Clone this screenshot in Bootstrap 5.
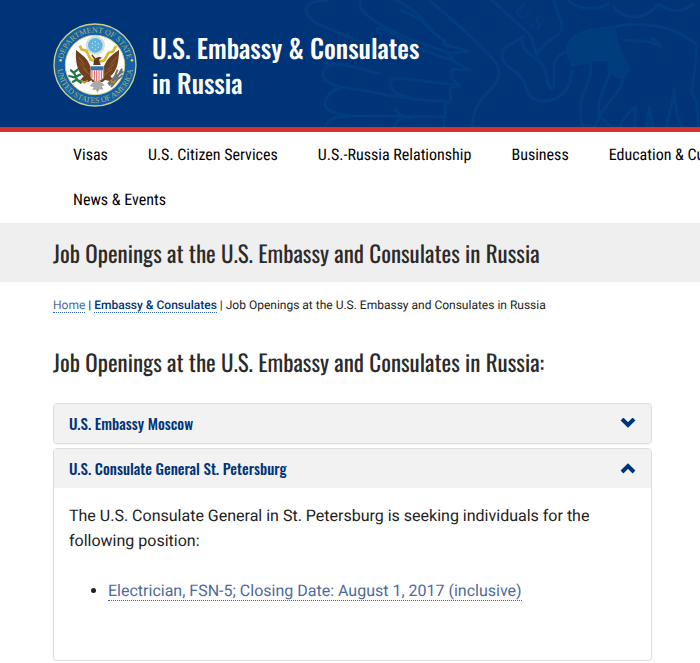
<!DOCTYPE html>
<html lang="en">
<head>
<meta charset="utf-8">
<meta name="viewport" content="width=device-width, initial-scale=1">
<title>Job Openings at the U.S. Embassy and Consulates in Russia</title>
<link href="https://cdn.jsdelivr.net/npm/bootstrap@5.3.0/dist/css/bootstrap.min.css" rel="stylesheet">
<style>
  :root { --navy: #003478; --display: Oswald, "Roboto Condensed", "Liberation Sans Narrow", "Liberation Sans", sans-serif; }
  body { font-family: Roboto, sans-serif; color: #222; text-rendering: geometricPrecision; }
  .gutter { padding-left: 53px; padding-right: 48px; }
  .site-header { background: var(--navy); border-bottom: 5px solid #d9302c; min-height: 132px; padding-top: 23px; }
  .watermark { pointer-events: none; }
  .site-name { font: 500 26px/35px var(--display); max-width: 300px; margin-top: 7px; margin-left: 15px; }
  .display-title { font-family: var(--display); font-weight: 400; font-size: 23px; line-height: 35px; color: #2b2b2b; }
  .site-menu { min-width: 860px; padding: 0 53px 1px; }
  .site-menu a { display: block; padding: 0 20px; font: 400 16px/45px "Roboto Condensed", "Liberation Sans Narrow", sans-serif; color: #000; text-decoration: none; }
  .title-band { background: #efefef; padding-top: 13px; padding-bottom: 11px; }
  .crumbs { font-size: 12px; line-height: 16px; padding-top: 15px; }
  .dotted { text-decoration: none; border-bottom: 1px dotted #2b66ad; color: var(--navy); }
  .dotted.soft { color: #4e6a9c; }
  .crumbs .dotted { font-weight: 500; }
  .crumbs .dotted.soft { font-weight: 400; }
  .section-title { margin: 32px 0 23px; }
  .panel { border: 1px solid #ddd; border-radius: 4px; box-shadow: 0 1px 1px rgba(0,0,0,.05); overflow: hidden; }
  .panel-toggle { background: #f2f2f2; color: var(--navy); font: 500 15px/39px var(--display); padding: 0 15px; }
  .panel-text { padding: 15px 15px 57px; font-size: 16px; line-height: 25px; }
  .panel-text p { margin-bottom: 25px; }
  .panel-text ul { padding-left: 39px; }
</style>
<script src="https://cdn.jsdelivr.net/npm/bootstrap@5.3.0/dist/js/bootstrap.bundle.min.js"></script>
</head>
<body>
<header class="site-header gutter position-relative overflow-hidden">
  <svg class="watermark position-absolute top-0 end-0" width="400" height="127" viewBox="0 0 1200 381" fill="none" stroke="#003d7d" stroke-width="9" stroke-linejoin="round" aria-hidden="true">
    <path d="M85 2C45 0 12 10 20 38C28 65 70 80 125 102L230 145M185 0C165 25 205 52 250 78L335 120L450 160M278 -8C330 25 372 50 392 92L430 120L445 145"/>
    <path d="M70 190C90 190 160 195 240 222M120 195C75 185 60 220 75 240C110 268 175 265 245 282C290 290 360 304 440 304M270 240C270 280 300 290 350 296M245 105C210 80 245 78 290 108C340 138 385 160 455 180M120 265C90 270 65 300 80 325C100 345 150 350 230 348L440 350M75 385C80 355 110 348 150 350M285 325C300 350 315 360 350 350M280 385C290 355 315 350 350 350M270 240C290 228 370 245 480 256"/>
    <path d="M300 30C350 50 375 65 400 98L435 122L430 132L505 154L445 160L462 185L512 211L458 207L455 235L480 257L450 264L452 304L435 310L437 340L430 350L432 381"/>
    <path d="M386 0C455 55 530 125 580 178C607 210 600 240 570 270C535 304 515 335 519 385"/>
    <path d="M570 -5L675 90C705 117 700 145 710 165C718 145 735 130 762 112C786 102 791 80 780 53L760 0M675 107L615 143C600 155 605 185 625 200C650 218 674 235 680 268C687 295 710 305 735 303C785 300 812 265 817 210M665 120C670 150 690 165 715 182C750 208 730 255 757 268C768 250 757 220 764 188C770 165 788 158 803 154"/>
    <path d="M803 0C835 28 890 35 928 10M938 15C965 60 1035 65 1075 12C1110 38 1155 38 1182 10"/>
    <path d="M805 155C800 110 855 82 925 87C965 68 1060 70 1115 90C1155 105 1170 120 1192 132L1180 240L1175 275L1190 310L1195 381M870 180C878 220 865 250 848 285C835 325 842 360 850 385M935 185C934 235 900 270 895 325L900 350M970 220C974 270 925 295 900 350L880 385M900 350L940 385"/>
    <path fill="#003d7d" d="M803 154C800 110 850 85 943 83C945 133 967 170 988 210C979 210 973 220 967 234C955 233 938 220 925 207L930 182C900 172 880 180 850 189L815 195Z"/>
    <path d="M970 119C1010 128 1060 115 1084 146M1050 116C1072 116 1080 128 1084 146M958 385C975 345 992 330 1008 322L1003 385M1038 385L1048 322L1060 385M1100 385C1105 335 1120 310 1122 265C1127 320 1130 360 1150 385"/>
    <g fill="#003d7d" stroke="none" font-family="Liberation Serif, serif" font-size="60"><text transform="translate(640 34) rotate(42)">U</text><text transform="translate(688 74) rotate(36)">S</text></g>
  </svg>
  <div class="d-flex position-relative">
    <svg class="flex-shrink-0" width="84" height="84" viewBox="36 39 252 252" role="img" aria-label="Department of State seal">
      <circle cx="162" cy="165" r="123" fill="#1460a6" stroke="#cbcf86" stroke-width="4"/>
      <circle cx="162" cy="165" r="89" fill="#fff" stroke="#d6d58b" stroke-width="3"/>
      <path id="arcTop" fill="none" d="M65 165A97 97 0 0 1 259 165"/>
      <path id="arcLow" fill="none" d="M48 165A114 114 0 0 0 276 165"/>
      <g fill="#a9b673" font-family="Liberation Serif, serif" font-size="24" text-anchor="middle">
        <text><textPath href="#arcTop" startOffset="50%">DEPARTMENT OF STATE</textPath></text>
        <text><textPath href="#arcLow" startOffset="50%">UNITED STATES OF AMERICA</textPath></text>
      </g>
      <circle cx="59" cy="151" r="4" fill="#dfce57"/><circle cx="273" cy="151" r="4" fill="#dfce57"/>
      <circle cx="163" cy="106" r="29" fill="#d9dfdf"/><circle cx="163" cy="106" r="22" fill="#63b4dc"/>
      <g fill="#c3e6f3"><circle cx="163" cy="95" r="2"/><circle cx="154" cy="101" r="2"/><circle cx="172" cy="101" r="2"/><circle cx="163" cy="106" r="2"/><circle cx="154" cy="112" r="2"/><circle cx="172" cy="112" r="2"/><circle cx="163" cy="118" r="2"/></g>
      <path fill="none" stroke="#d5b92f" stroke-width="8" d="M116 107L122 119L136 122L148 147L166 157M225 108L216 124L202 129L190 151L166 157"/>
      <path fill="#704020" d="M105 120C103 148 107 186 128 199L117 211L142 216L151 211L154 216H185L192 210L221 216L208 198C229 185 234 150 234 119C223 128 207 137 198 151L186 174H151L139 151C130 137 116 130 105 120Z"/>
      <path fill="none" stroke="#a87746" stroke-width="2" d="M112 140L130 165M117 160L138 182M125 176L148 195M228 140L208 165M221 161L199 181M214 177L190 195"/>
      <path fill="#603b22" d="M151 137C156 128 171 130 174 140L183 143L174 149L179 165H157L160 148Z"/><path fill="#f5efdc" d="M153 132C162 128 174 133 175 140L163 145Z"/>
      <path fill="#fff" stroke="#b89a58" d="M149 169H189V201Q184 211 169 215Q153 210 149 201Z"/>
      <path fill="#2973b7" d="M150 169H188V181H150Z"/>
      <path stroke="#d35c65" stroke-width="3" d="M153 181V205M160 181V210M167 181V213M174 181V213M181 181V210M187 181V203"/>
      <path fill="#aaa9a3" d="M160 213L146 229L158 231L154 240L165 239L169 249L176 238L187 239L183 229L191 226L177 213Z"/>
      <path fill="none" stroke="#26784a" stroke-width="7" stroke-linecap="round" d="M90 181L98 188L110 179M85 198L99 202L118 194M96 215L107 209L119 218M99 188L108 210L121 215"/>
      <path fill="none" stroke="#6c7375" stroke-width="6" d="M243 176L223 211L204 226M247 184L224 199L218 215M245 195L230 208L210 231M230 179L221 200L201 222"/>
      <path fill="none" stroke="#bd8926" stroke-width="5" d="M120 211L130 218L141 211M208 211L219 218L224 211"/>
    </svg>
    <div class="site-name text-white">U.S. Embassy &amp; Consulates in&nbsp;Russia</div>
  </div>
</header>
<nav class="overflow-hidden" aria-label="Main">
  <ul class="site-menu d-flex flex-wrap list-unstyled mb-0">
    <li><a href="#">Visas</a></li>
    <li><a href="#">U.S. Citizen Services</a></li>
    <li><a href="#">U.S.-Russia Relationship</a></li>
    <li><a href="#">Business</a></li>
    <li><a href="#">Education &amp; Culture</a></li>
    <li><a href="#">News &amp; Events</a></li>
  </ul>
</nav>
<div class="title-band gutter"><h1 class="display-title mb-0">Job Openings at the U.S. Embassy and Consulates in Russia</h1></div>
<main class="gutter">
  <nav class="crumbs" aria-label="Breadcrumb"><a class="dotted soft" href="#">Home</a> | <a class="dotted" href="#">Embassy &amp; Consulates</a> | Job Openings at the U.S. Embassy and Consulates in Russia</nav>
  <h2 class="display-title section-title">Job Openings at the U.S. Embassy and Consulates in Russia:</h2>
  <div class="d-flex flex-column gap-1">
    <section class="panel">
      <button class="panel-toggle border-0 w-100 d-flex justify-content-between align-items-center text-start" type="button" data-bs-toggle="collapse" data-bs-target="#moscow" aria-expanded="false" aria-controls="moscow">U.S. Embassy Moscow
        <svg width="16" height="12" viewBox="0 0 16 12" fill="none" stroke="currentColor" stroke-width="4" aria-hidden="true"><path d="M2 1L8 7L14 1"/></svg></button>
      <div class="collapse" id="moscow"></div>
    </section>
    <section class="panel">
      <button class="panel-toggle border-0 w-100 d-flex justify-content-between align-items-center text-start" type="button" data-bs-toggle="collapse" data-bs-target="#petersburg" aria-expanded="true" aria-controls="petersburg">U.S. Consulate General St. Petersburg
        <svg width="16" height="12" viewBox="0 0 16 12" fill="none" stroke="currentColor" stroke-width="4" aria-hidden="true"><path d="M2 9L8 3L14 9"/></svg></button>
      <div class="collapse show" id="petersburg">
        <div class="panel-text">
          <p>The U.S. Consulate General in St. Petersburg is seeking individuals for the following position:</p>
          <ul class="mb-0"><li><a class="dotted soft" href="#">Electrician, FSN-5; Closing Date: August 1, 2017 (inclusive)</a></li></ul>
        </div>
      </div>
    </section>
  </div>
</main>
</body>
</html>
